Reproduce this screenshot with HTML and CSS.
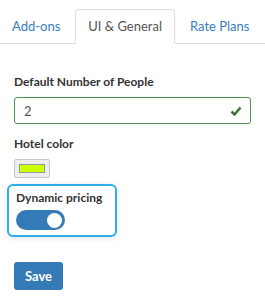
FILE: index.html
```html
<!DOCTYPE html>
<html lang="en">
<head>
    <meta charset="UTF-8">
    <title>Settings</title>
    <link rel="stylesheet" href="styles.css">
</head>
<body>
    <ul class="tabs">
        <li class="tab">Add-ons</li>
        <li class="tab active">UI &amp; General</li>
        <li class="tab">Rate Plans</li>
    </ul>

    <div class="content">
        <div class="field">
            <label class="label">Default Number of People</label>
            <div class="input ok">
                <span>2</span>
                <svg class="check" width="12" height="10" viewBox="0 0 12 10">
                    <polyline points="1.5,5.5 4.5,8.5 10.5,1.5" fill="none" stroke="#3c763d" stroke-width="2.6"/>
                </svg>
            </div>
        </div>

        <div class="field color">
            <label class="label">Hotel color</label>
            <div class="swatch"><div class="swatch-fill"></div></div>
        </div>

        <div class="field focus">
            <label class="label">Dynamic pricing</label>
            <div class="toggle"><div class="knob"></div></div>
        </div>

        <button class="save">Save</button>
    </div>
</body>
</html>
```

FILE: styles.css
```css
* {
    margin: 0;
    padding: 0;
    box-sizing: border-box;
}

body {
    font-family: Lato, "Open Sans", sans-serif;
    background: white;
    color: #333;
}

.tabs {
    list-style: none;
    display: flex;
    padding-top: 9px;
    border-bottom: 1px solid #ddd;
}

.tab {
    flex-shrink: 0;
    white-space: nowrap;
    font-size: 13px;
    line-height: 16px;
    padding: 8px 12px 9px 12px;
    margin-right: 2px;
    margin-bottom: -1px;
    border: 1px solid transparent;
    border-radius: 4px 4px 0 0;
    color: #3a7cc0;
}

.tab:first-child {
    margin-left: -1px;
}

.tab.active {
    color: #555;
    background: white;
    border-color: #ddd;
    border-bottom-color: white;
}

.content {
    display: flex;
    flex-direction: column;
    align-items: flex-start;
    padding: 30px 14px 0 14px;
}

.field {
    display: flex;
    flex-direction: column;
    align-items: flex-start;
    width: 100%;
    margin-bottom: 12px;
}

.field.color {
    margin-bottom: 6px;
}

.label {
    white-space: nowrap;
    font-size: 12px;
    font-weight: 700;
    line-height: 16px;
    margin-bottom: 7px;
    color: #333;
}

.input {
    width: 100%;
    height: 27px;
    border: 1px solid #4f8f4f;
    border-radius: 3px;
    display: flex;
    align-items: center;
    justify-content: space-between;
    padding: 0 8px 0 9px;
    font-size: 13px;
    color: #555;
}

.swatch {
    width: 36px;
    height: 19px;
    border: 1px solid #c8c8c8;
    border-radius: 2px;
    background: #eee;
    padding: 4px;
}

.swatch-fill {
    height: 100%;
    background: #ccff00;
    border: 1px solid #999;
}

.focus {
    width: 110px;
    margin-left: -7px;
    padding: 4px 7px 5px 7px;
    border: 2px solid #2bb0e9;
    border-radius: 6px;
    box-shadow: 0 1px 6px rgba(0, 0, 0, 0.12);
    margin-bottom: 25px;
}

.focus .label {
    margin-bottom: 4px;
}

.toggle {
    width: 49px;
    height: 20px;
    border-radius: 10px;
    background: #337ab7;
    display: flex;
    align-items: center;
    justify-content: flex-end;
    padding-right: 3px;
}

.knob {
    width: 15px;
    height: 15px;
    border-radius: 50%;
    background: white;
}

.save {
    font-family: inherit;
    font-size: 13px;
    font-weight: 700;
    color: white;
    background: #337ab7;
    border: none;
    border-radius: 3px;
    width: 49px;
    height: 28px;
}
```
